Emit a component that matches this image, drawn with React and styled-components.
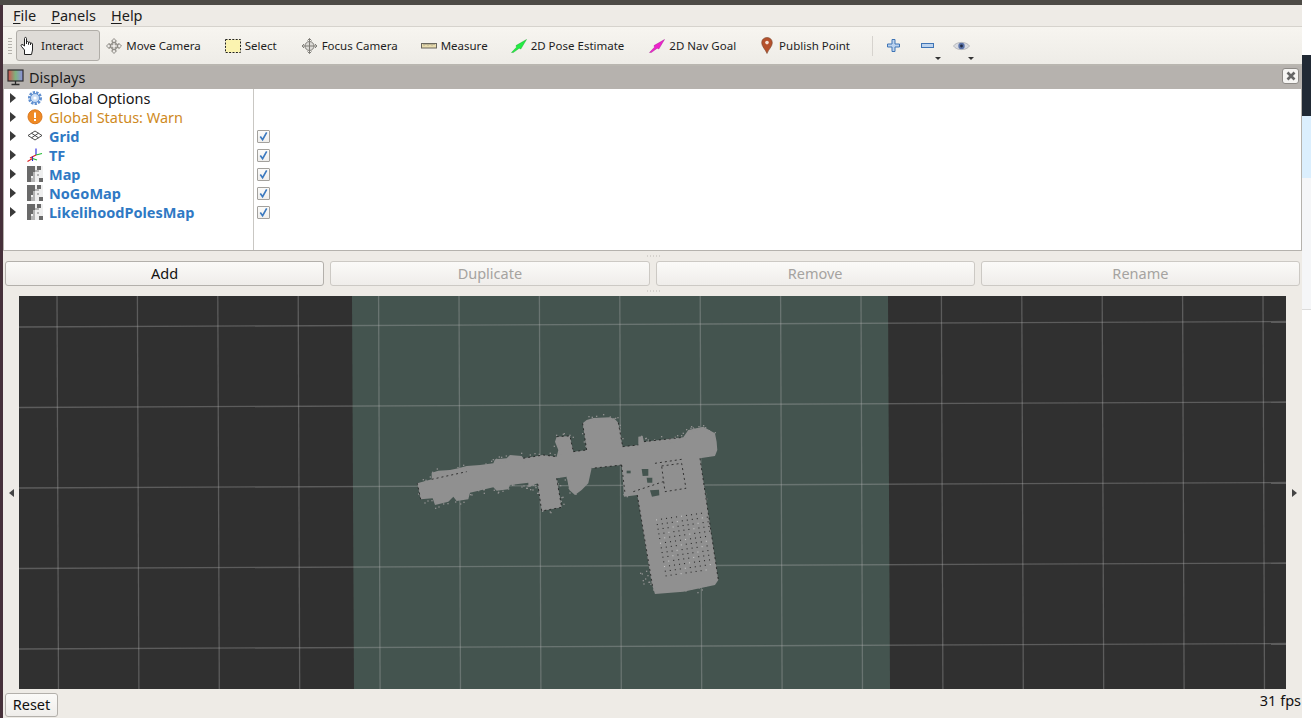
import styled, { createGlobalStyle } from "styled-components";

const GlobalStyle = createGlobalStyle`
  html, body { margin: 0; padding: 0; height: 100%; overflow: hidden; background: #fff; }
  body { font-family: "Noto Sans", "Open Sans", sans-serif; color: #111; }
  #root { height: 100%; }
`;

const Screen = styled.div`
  display: flex;
  flex-direction: column;
  width: 1311px;
  height: 718px;
  overflow: hidden;
`;

const TitleEdge = styled.div`
  flex: none;
  width: 1302px;
  height: 5px;
  background: #4d4b46;
`;

const Desktop = styled.div`
  flex: 1;
  display: flex;
  min-height: 0;
`;

const LeftEdge = styled.div`
  flex: none;
  width: 3px;
  background: #46303a;
`;

const Window = styled.div`
  flex: none;
  width: 1299px;
  display: flex;
  flex-direction: column;
  background: #eeebe6;
`;

const Behind = styled.div`
  flex: 1;
  display: flex;
  flex-direction: column;
`;

const BehindStrip = styled.div`
  flex: none;
  height: ${(p) => p.$h}px;
  background: ${(p) => p.$bg};
  border-bottom: ${(p) => (p.$line ? `1px solid ${p.$line}` : "none")};
  box-sizing: border-box;
`;

const MenuBar = styled.div`
  flex: none;
  height: 22px;
  display: flex;
  align-items: center;
  padding: 0 0 2px 10px;
  gap: 15px;
  box-sizing: border-box;
  border-bottom: 1px solid #d6d3cd;
  font-size: 14.5px;
  color: #1c1c1c;
`;

const MenuItem = styled.span`
  u { text-underline-offset: 2px; }
`;

const ToolBar = styled.div`
  flex: none;
  height: 39px;
  display: flex;
  align-items: center;
  gap: 2px;
  box-sizing: border-box;
  padding-left: 5px;
  background: linear-gradient(#f7f5f0, #eeece7);
  border-bottom: 2px solid #b9b6b0;
  font-size: 11.5px;
  color: #1e1e1e;
`;

const Grip = styled.div`
  flex: none;
  width: 4px;
  height: 18px;
  margin-right: 2px;
  background-image: radial-gradient(#b5b2ac 0.7px, transparent 0.8px);
  background-size: 2px 3px;
`;

const Tool = styled.div`
  flex: none;
  height: 31px;
  display: flex;
  align-items: center;
  gap: ${(p) => p.$gap ?? 4}px;
  box-sizing: border-box;
  padding: 0 ${(p) => p.$right ?? 16}px 0 3px;
  border-radius: 3px;
  border: 1px solid ${(p) => (p.$active ? "#b0ada8" : "transparent")};
  background: ${(p) => (p.$active ? "#dedbd7" : "transparent")};
  white-space: nowrap;
`;

const Separator = styled.div`
  flex: none;
  width: 1px;
  height: 20px;
  margin: 0 9px 0 10px;
  background: #d6d3ce;
`;

const DropTool = styled.div`
  flex: none;
  position: relative;
  display: flex;
  align-items: center;
  justify-content: center;
  width: ${(p) => p.$w}px;
  height: 31px;
  margin-left: ${(p) => p.$ml ?? 0}px;
`;

const DropMark = styled.span`
  position: absolute;
  right: 0;
  bottom: 1px;
  border-left: 3px solid transparent;
  border-right: 3px solid transparent;
  border-top: 3px solid #333;
`;

const PanelHeader = styled.div`
  flex: none;
  height: 23px;
  display: flex;
  align-items: center;
  gap: 5px;
  padding: 0 3px 0 4px;
  background: #b6b2ae;
  font-size: 14.5px;
  color: #1b1b1b;
`;

const PanelTitle = styled.span`
  flex: 1;
  margin-bottom: 2px;
`;

const CloseButton = styled.div`
  width: 17px;
  height: 16px;
  margin-bottom: 3px;
  box-sizing: border-box;
  display: flex;
  align-items: center;
  justify-content: center;
  background: #f6f5f3;
  border: 1px solid #8d8a86;
  border-radius: 3px;
`;

const Tree = styled.div`
  flex: none;
  height: 162px;
  box-sizing: border-box;
  display: grid;
  grid-template-columns: 250px 1fr;
  background: #fff;
  border-left: 1px solid #b5b2ad;
  border-right: 1px solid #b5b2ad;
  border-bottom: 1px solid #b5b2ad;
`;

const NameColumn = styled.div`
  border-right: 1px solid #c9c7c3;
`;

const ValueColumn = styled.div`
  padding-left: 3px;
`;

const TreeRow = styled.div`
  height: 19px;
  box-sizing: border-box;
  padding-bottom: 2px;
  display: flex;
  align-items: center;
  font-size: 14.5px;
  font-weight: ${(p) => (p.$bold ? 700 : 400)};
  color: ${(p) => p.$color ?? "#141414"};
  white-space: nowrap;
`;

const Caret = styled.span`
  flex: none;
  width: 0;
  height: 0;
  margin: 0 11px 0 6px;
  border-top: 5px solid transparent;
  border-bottom: 5px solid transparent;
  border-left: 6px solid #3a3a3a;
`;

const RowIcon = styled.span`
  flex: none;
  width: 16px;
  height: 16px;
  margin-right: 6px;
  display: flex;
`;

const ValueRow = styled.div`
  height: 19px;
  display: flex;
  align-items: center;
`;

const Check = styled.span`
  width: 13px;
  height: 13px;
  box-sizing: border-box;
  display: flex;
  align-items: center;
  justify-content: center;
  border: 1px solid #a3a19d;
  border-radius: 1px;
  background: linear-gradient(#fbfbfa, #efeeec);
`;

const Splitter = styled.div`
  flex: none;
  height: ${(p) => p.$h}px;
  display: flex;
  align-items: center;
  justify-content: center;
`;

const SplitDots = styled.span`
  width: 14px;
  height: 2px;
  background-image: radial-gradient(#bdbab4 0.7px, transparent 0.8px);
  background-size: 3px 2px;
`;

const ButtonRow = styled.div`
  flex: none;
  display: grid;
  grid-template-columns: repeat(4, 1fr);
  gap: 6px;
  padding: 0 2px;
`;

const PushButton = styled.button`
  height: 25px;
  padding: 0 0 2px;
  font: inherit;
  font-size: 14.5px;
  color: ${(p) => (p.disabled ? "#a5a3a0" : "#111")};
  border: 1px solid ${(p) => (p.disabled ? "#ccc9c4" : "#b3b0ab")};
  border-radius: 3px;
  background: linear-gradient(#fbfaf8, #efedea);
`;

const SceneRow = styled.div`
  flex: 1;
  min-height: 0;
  display: flex;
`;

const Gutter = styled.div`
  flex: none;
  width: 16px;
  display: flex;
  align-items: center;
  justify-content: center;
`;

const GutterArrow = styled.span`
  width: 0;
  height: 0;
  border-top: 4.5px solid transparent;
  border-bottom: 4.5px solid transparent;
  ${(p) => (p.$left ? "border-right: 5px solid #444;" : "border-left: 5px solid #444;")}
`;

const Scene = styled.svg`
  flex: 1;
  min-width: 0;
  height: 393px;
  display: block;
  background: #303030;
`;

const StatusBar = styled.div`
  flex: none;
  height: 29px;
  display: flex;
  align-items: center;
  justify-content: space-between;
  padding: 0 1px 0 2px;
  font-size: 14.5px;
`;

const FpsLabel = styled.span`
  margin-bottom: 7px;
`;

const ResetButton = styled.button`
  width: 53px;
  height: 24px;
  margin-top: 2px;
  padding: 0 0 2px;
  font: inherit;
  color: #111;
  border: 1px solid #b3b0ab;
  border-radius: 3px;
  background: linear-gradient(#fbfaf8, #efedea);
`;

const HandIcon = () => (
  <svg width="17" height="20" viewBox="0 0 17 20" fill="none" stroke="#222" strokeWidth="1">
    <path d="M4.5 18.5 V14 L1.5 10.5 C.5 9 1.5 8 3 8.8 L4.5 10 V2.5 C4.5 1 6.5 1 6.5 2.5 V8 V6.5 C6.5 5.2 8.5 5.2 8.5 6.5 V8.5 V7 C8.5 5.8 10.5 5.8 10.5 7 V9 V8 C10.5 6.8 12.5 6.8 12.5 8 V14 L11.5 18.5 Z" fill="#fff" />
  </svg>
);

const MoveIcon = () => (
  <svg width="16" height="16" viewBox="0 0 16 16" fill="#efede9" stroke="#77756f" strokeWidth="0.8">
    <path d="M8 .5 L10.5 3.2 H9.2 V6.8 H12.8 V5.3 L15.5 8 L12.8 10.7 V9.2 H9.2 V12.8 H10.5 L8 15.5 L5.5 12.8 H6.8 V9.2 H3.2 V10.7 L.5 8 L3.2 5.3 V6.8 H6.8 V3.2 H5.5 Z" />
    <circle cx="8" cy="8" r="3.6" fill="none" />
  </svg>
);

const SelectIcon = () => (
  <svg width="16" height="14" viewBox="0 0 16 14">
    <rect x=".5" y=".5" width="15" height="13" fill="#fbf3b0" stroke="#222" strokeDasharray="2 1.4" />
  </svg>
);

const FocusIcon = () => (
  <svg width="17" height="16" viewBox="0 0 16 16" fill="none" stroke="#807e79" strokeWidth="1">
    <circle cx="8" cy="8" r="4.5" fill="#dcdad6" />
    <path d="M8 .5 V15.5 M.5 8 H15.5" />
    <path d="M6 2.5 L8 .5 L10 2.5 M6 13.5 L8 15.5 L10 13.5 M2.5 6 L.5 8 L2.5 10 M13.5 6 L15.5 8 L13.5 10" />
  </svg>
);

const RulerIcon = () => (
  <svg width="16" height="16" viewBox="0 0 16 16">
    <rect x=".5" y="5.5" width="15" height="4.5" fill="#e8dcae" stroke="#6a675e" />
    <path d="M3 5.5 V7.5 M5 5.5 V7 M7 5.5 V7.5 M9 5.5 V7 M11 5.5 V7.5 M13 5.5 V7" stroke="#6a675e" strokeWidth=".7" />
  </svg>
);

const ArrowIcon = ({ color, edge }) => (
  <svg width="16" height="14" viewBox="0 0 16 14">
    <path d="M.5 13.5 L5.5 8.2 L5 6.6 L15.5 .5 L9.8 10 L8.2 9.2 L2.2 13.6 Z" fill={color} stroke={edge} strokeWidth=".4" />
  </svg>
);

const PinIcon = () => (
  <svg width="12" height="17" viewBox="0 0 12 17">
    <path d="M6 16.5 C4.5 12.5 .7 9.5 .7 5.8 C.7 2.6 3 .5 6 .5 C9 .5 11.3 2.6 11.3 5.8 C11.3 9.5 7.5 12.5 6 16.5 Z" fill="#b5512c" stroke="#7a4a30" strokeWidth=".6" />
    <circle cx="6" cy="5.6" r="1.8" fill="#f4e3d8" />
  </svg>
);

const PlusIcon = () => (
  <svg width="13" height="13" viewBox="0 0 13 13">
    <path d="M5 .5 H8 V5 H12.5 V8 H8 V12.5 H5 V8 H.5 V5 H5 Z" fill="#bcd3ee" stroke="#3f74b5" />
  </svg>
);

const MinusIcon = () => (
  <svg width="13" height="5" viewBox="0 0 13 5">
    <rect x=".5" y=".5" width="12" height="4" fill="#bcd3ee" stroke="#3f74b5" />
  </svg>
);

const EyeIcon = () => (
  <svg width="17" height="12" viewBox="0 0 17 12">
    <path d="M.5 6 C3.5 1.2 13.5 1.2 16.5 6 C13.5 10.8 3.5 10.8 .5 6 Z" fill="#d9dbe0" stroke="#a9acb3" strokeWidth=".8" />
    <circle cx="8.5" cy="6" r="3.2" fill="#5a72a8" />
    <circle cx="8.5" cy="6" r="1.4" fill="#1f2a44" />
  </svg>
);

const DisplaysIcon = () => (
  <svg width="17" height="17" viewBox="0 0 17 17">
    <defs>
      <linearGradient id="screenFill" x1="0" x2="1" y1="0" y2="0">
        <stop offset="0" stopColor="#d0504e" />
        <stop offset="0.5" stopColor="#7fb27f" />
        <stop offset="1" stopColor="#8d8fe0" />
      </linearGradient>
    </defs>
    <rect x="1" y="1" width="15" height="11" fill="url(#screenFill)" stroke="#2a2a2a" strokeWidth="1.2" />
    <path d="M8.5 12 V15 M4.5 15.5 H12.5" stroke="#2a2a2a" strokeWidth="1.3" />
  </svg>
);

const CloseIcon = () => (
  <svg width="10" height="10" viewBox="0 0 10 10">
    <path d="M1.5 1.5 L8.5 8.5 M8.5 1.5 L1.5 8.5" stroke="#666" strokeWidth="2.6" />
  </svg>
);

const GearIcon = () => (
  <svg width="16" height="16" viewBox="0 0 16 16">
    <circle cx="8" cy="8" r="5.5" fill="none" stroke="#5f8fd0" strokeWidth="3" strokeDasharray="2.2 1.1" />
    <circle cx="8" cy="8" r="4.5" fill="#c9dcf4" stroke="#5f8fd0" />
    <circle cx="8" cy="8" r="1.6" fill="#fff" />
  </svg>
);

const WarnIcon = () => (
  <svg width="16" height="16" viewBox="0 0 16 16">
    <circle cx="8" cy="7.8" r="7" fill="#f08a24" stroke="#d9771c" />
    <rect x="7" y="3.5" width="2" height="5.5" fill="#fff" />
    <rect x="7" y="10" width="2" height="2" fill="#fff" />
  </svg>
);

const GridIcon = () => (
  <svg width="16" height="16" viewBox="0 0 16 16" fill="none" stroke="#3a3a3a" strokeWidth=".9">
    <path d="M8 3 L15 7.5 L8 12 L1 7.5 Z M4.5 5.2 L11.5 9.8 M11.5 5.2 L4.5 9.8" />
  </svg>
);

const TfIcon = () => (
  <svg width="16" height="16" viewBox="0 0 16 16" fill="none" strokeWidth="1.1">
    <path d="M9 8 V1.5" stroke="#2222dd" />
    <path d="M9 8 L15 6.5" stroke="#22bb33" />
    <path d="M9 8 L3 11" stroke="#dd2222" />
    <path d="M5.5 9.5 V14" stroke="#2222dd" />
    <path d="M5.5 11.5 L10 13" stroke="#22bb33" />
    <path d="M5.5 11.5 L.5 14.5" stroke="#dd2222" />
  </svg>
);

const mapCells = ["dddd.dd.", "dddd.dd.", "ddddll..", "dddl....", "dddl.l..", "dd.l....", "ddll..dd", "ddll..dd"];
const cellFill = { d: "#6a6a6a", l: "#b4b4b4", ".": "#efefef" };

const MapIcon = () => (
  <svg width="16" height="16" viewBox="0 0 16 16" shapeRendering="crispEdges">
    {mapCells.map((row, y) =>
      row.split("").map((c, x) => (
        <rect key={`${x}-${y}`} x={x * 2} y={y * 2} width="2" height="2" fill={cellFill[c]} />
      ))
    )}
  </svg>
);

const CheckMark = () => (
  <svg width="11" height="11" viewBox="0 0 12 12" fill="none" stroke="#3b79bf" strokeWidth="1.8">
    <path d="M2.5 6 L5 9.5 L9.5 1.5" />
  </svg>
);

const BLUE = "#2f79c4";

const rows = [
  { label: "Global Options", icon: <GearIcon /> },
  { label: "Global Status: Warn", icon: <WarnIcon />, color: "#cf8a1e" },
  { label: "Grid", icon: <GridIcon />, color: BLUE, bold: true, checked: true },
  { label: "TF", icon: <TfIcon />, color: BLUE, bold: true, checked: true },
  { label: "Map", icon: <MapIcon />, color: BLUE, bold: true, checked: true },
  { label: "NoGoMap", icon: <MapIcon />, color: BLUE, bold: true, checked: true },
  { label: "LikelihoodPolesMap", icon: <MapIcon />, color: BLUE, bold: true, checked: true },
];

const verticals = Array.from({ length: 16 }, (_, i) => 57 + i * 80.4);
const horizontals = [
  [327, 321.5],
  [407.5, 402],
  [488, 482.5],
  [568.5, 563],
  [649, 643.5],
];

// outline of the map, in 3x crop coordinates around (400, 400)
const outlinePoints = [
  [52, 250], [95, 238], [95, 218], [115, 212], [150, 210], [175, 205], [200, 198], [240, 195], [280, 190],
  [285, 178], [320, 175], [330, 165], [365, 168], [370, 175], [430, 165], [470, 170], [475, 150], [465, 125],
  [470, 110], [510, 108], [520, 155], [560, 150], [548, 70], [560, 60], [580, 54], [630, 52], [645, 58], [655, 68],
  [668, 140], [715, 135], [715, 110], [728, 108], [732, 125], [850, 112], [865, 90], [910, 80], [945, 100],
  [950, 125], [952, 150], [945, 168], [900, 175], [955, 540], [945, 555], [850, 575], [765, 582], [755, 550],
  [712, 285], [672, 290], [665, 195], [575, 205], [565, 250], [545, 270], [525, 285], [508, 270], [500, 230],
  [470, 235], [485, 322], [425, 333], [413, 250], [385, 262], [385, 248], [330, 255], [325, 268], [290, 272],
  [280, 262], [210, 278], [205, 298], [170, 303], [160, 290], [145, 305], [105, 315], [98, 295], [62, 298],
];
const mapOutline = outlinePoints.map((p) => p.join(",")).join(" ");

const mapHoles = [
  "725,207 745,207 745,227 728,228",
  "740,233 757,233 757,248 742,248",
  "750,271 777,269 778,286 756,290",
  "680,212 692,212 692,220 680,220",
];

const wallLines = [
  "900,175 955,540",
  "712,285 758,560",
  "668,140 715,135",
  "732,125 850,112",
  "665,195 575,205",
  "548,70 560,150",
  "655,68 668,140",
  "520,155 560,150",
  "470,110 510,108 520,155",
  "470,235 485,322 425,333 413,250",
  "785,198 845,190 858,265 795,275 785,198",
  "765,190 845,178",
  "700,275 790,245",
  "665,195 675,280",
  "370,175 430,165 470,170",
  "62,298 52,250",
  "95,238 200,215",
];

const roomDots = [];
for (let i = 0; i < 11; i++) {
  for (let j = 0; j < 13; j++) {
    const x = 768 + i * 15 + j * 2.4;
    const y = 358 - i * 2.2 + j * 14;
    const inRoom = x < 930 && y < 540 && y > 338;
    if (inRoom) roomDots.push({ x, y, light: (i + j) % 5 === 0 });
  }
}

// rough speckle along the unfinished scan edges
let seed = 17;
const rand = () => {
  seed = (seed * 16807) % 2147483647;
  return seed / 2147483647;
};
const isRoughEdge = (x, y) => x < 530 || y < 128 || (x < 775 && y > 510) || (x > 850 && y > 560);
const fringe = [];
outlinePoints.forEach(([ax, ay], i) => {
  const [bx, by] = outlinePoints[(i + 1) % outlinePoints.length];
  const steps = Math.ceil(Math.hypot(bx - ax, by - ay) / 6);
  for (let s = 0; s < steps; s++) {
    const x = ax + ((bx - ax) * s) / steps;
    const y = ay + ((by - ay) * s) / steps;
    if (isRoughEdge(x, y) && rand() > 0.45) {
      fringe.push([Math.round(x + (rand() - 0.5) * 16), Math.round(y + (rand() - 0.5) * 22)]);
    }
  }
});
const extraFringe = [
  [725, 520], [735, 535], [745, 545], [730, 550], [742, 525], [720, 518], [738, 512], [728, 540],
  [670, 282], [680, 288], [915, 280], [918, 295], [880, 85], [895, 78], [905, 86],
];

export default function App() {
  return (
    <Screen>
      <GlobalStyle />
      <TitleEdge />
      <Desktop>
        <LeftEdge />
        <Window>
          <MenuBar>
            <MenuItem><u>F</u>ile</MenuItem>
            <MenuItem><u>P</u>anels</MenuItem>
            <MenuItem><u>H</u>elp</MenuItem>
          </MenuBar>
          <ToolBar>
            <Grip />
            <Tool $active><HandIcon />Interact</Tool>
            <Tool $right={17}><MoveIcon />Move Camera</Tool>
            <Tool $right={17}><SelectIcon />Select</Tool>
            <Tool><FocusIcon />Focus Camera</Tool>
            <Tool><RulerIcon />Measure</Tool>
            <Tool $right={18}><ArrowIcon color="#22ee44" edge="#119922" />2D Pose Estimate</Tool>
            <Tool $right={18}><ArrowIcon color="#ee22cc" edge="#991188" />2D Nav Goal</Tool>
            <Tool $right={9} $gap={6}><PinIcon />Publish Point</Tool>
            <Separator />
            <DropTool $w={20}><PlusIcon /></DropTool>
            <DropTool $w={26} $ml={9}><MinusIcon /><DropMark /></DropTool>
            <DropTool $w={25} $ml={6}><EyeIcon /><DropMark /></DropTool>
          </ToolBar>
          <PanelHeader>
            <DisplaysIcon />
            <PanelTitle>Displays</PanelTitle>
            <CloseButton><CloseIcon /></CloseButton>
          </PanelHeader>
          <Tree>
            <NameColumn>
              {rows.map((r) => (
                <TreeRow key={r.label} $bold={r.bold} $color={r.color}>
                  <Caret />
                  <RowIcon>{r.icon}</RowIcon>
                  {r.label}
                </TreeRow>
              ))}
            </NameColumn>
            <ValueColumn>
              {rows.map((r) => (
                <ValueRow key={r.label}>
                  {r.checked && <Check><CheckMark /></Check>}
                </ValueRow>
              ))}
            </ValueColumn>
          </Tree>
          <Splitter $h={10}><SplitDots /></Splitter>
          <ButtonRow>
            <PushButton>Add</PushButton>
            <PushButton disabled>Duplicate</PushButton>
            <PushButton disabled>Remove</PushButton>
            <PushButton disabled>Rename</PushButton>
          </ButtonRow>
          <Splitter $h={10}><SplitDots /></Splitter>
          <SceneRow>
            <Gutter><GutterArrow $left /></Gutter>
            <Scene viewBox="19 296 1267 393">
              <polygon points="352,296 888,296 890,689 354,689" fill="#44544f" />
              <g stroke="#b4b4b4" strokeOpacity="0.34" strokeWidth="1.3">
                {verticals.map((x) => (
                  <line key={x} x1={x} y1="296" x2={x + 1.5} y2="689" />
                ))}
                {horizontals.map(([a, b]) => (
                  <line key={a} x1="19" y1={a} x2="1286" y2={b} />
                ))}
              </g>
              <g transform="translate(400 400) scale(0.3333)">
                <polygon points={mapOutline} fill="#909090" />
                {[...fringe, ...extraFringe].map(([x, y], i) => (
                  <rect key={i} x={x} y={y} width="4" height="4" fill="#909090" />
                ))}
                {mapHoles.map((p) => (
                  <polygon key={p} points={p} fill="#44544f" />
                ))}
                <g fill="none" stroke="#1c1c1c" strokeWidth="2.4" strokeDasharray="6 9">
                  {wallLines.map((p) => (
                    <polyline key={p} points={p} />
                  ))}
                </g>
                {roomDots.map((d) => (
                  <rect
                    key={`${d.x}-${d.y}`}
                    x={d.x}
                    y={d.y}
                    width="3.2"
                    height="3.2"
                    fill={d.light ? "#c8c8c8" : "#2c2c2c"}
                  />
                ))}
              </g>
            </Scene>
            <Gutter><GutterArrow /></Gutter>
          </SceneRow>
          <StatusBar>
            <ResetButton>Reset</ResetButton>
            <FpsLabel>31 fps</FpsLabel>
          </StatusBar>
        </Window>
        <Behind>
          <BehindStrip $h={50} $bg="#ffffff" />
          <BehindStrip $h={61} $bg="#212a35" />
          <BehindStrip $h={62} $bg="#dbeffe" />
          <BehindStrip $h={132} $bg="#f5f6f8" $line="#dcdcdc" />
        </Behind>
      </Desktop>
    </Screen>
  );
}
